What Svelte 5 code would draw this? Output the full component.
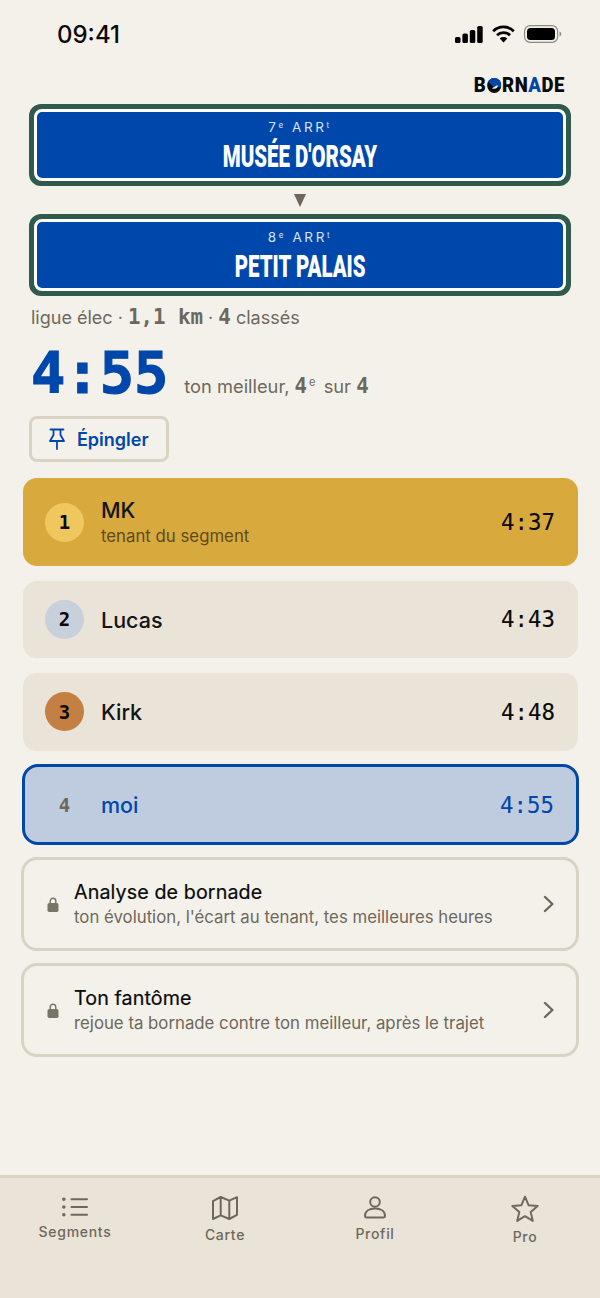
<script lang="ts">
	const ranks = [
		{ n: 1, name: 'MK', sub: 'tenant du segment', time: '4:37', cls: 'gold' },
		{ n: 2, name: 'Lucas', sub: '', time: '4:43', cls: 'silver' },
		{ n: 3, name: 'Kirk', sub: '', time: '4:48', cls: 'bronze' },
		{ n: 4, name: 'moi', sub: '', time: '4:55', cls: 'me' }
	];

	const locked = [
		{ title: 'Analyse de bornade', sub: "ton évolution, l'écart au tenant, tes meilleures heures" },
		{ title: 'Ton fantôme', sub: 'rejoue ta bornade contre ton meilleur, après le trajet' }
	];
</script>

<div class="screen">
	<header class="status">
		<span class="clock">09:41</span>
		<div class="status-icons">
			<svg width="28" height="17" viewBox="0 0 28 17" fill="#000">
				<rect x="0" y="11" width="5.5" height="6" rx="1.6" />
				<rect x="7.4" y="7.5" width="5.5" height="9.5" rx="1.6" />
				<rect x="14.8" y="4" width="5.5" height="13" rx="1.6" />
				<rect x="22.2" y="0" width="5.5" height="17" rx="1.6" />
			</svg>
			<svg width="23" height="18" viewBox="0 0 23 18" fill="none" stroke="#000" stroke-width="2.8">
				<path d="M1.2 6.2a14.6 14.6 0 0 1 20.6 0" />
				<path d="M5 10.2a9.3 9.3 0 0 1 13 0" />
				<path d="M11.5 17.6 7.7 13.6a5.6 5.6 0 0 1 7.6 0z" fill="#000" stroke="none" />
			</svg>
			<svg width="38" height="18" viewBox="0 0 38 18">
				<rect x="0.6" y="0.6" width="33" height="16.8" rx="5.5" fill="none" stroke="#8e8b85" stroke-width="1.2" />
				<rect x="3" y="3" width="28" height="12" rx="3.5" fill="#000" />
				<path d="M35.5 6.5c1.2.4 1.8 1.3 1.8 2.5s-.6 2.1-1.8 2.5z" fill="#8e8b85" />
			</svg>
		</div>
	</header>

	<div class="brand-row">
		<span class="brand">B<svg class="brand-o" width="15" height="15" viewBox="0 0 15 15"><circle cx="7.5" cy="7.5" r="7.5" fill="#0a0a0a" /><path d="M1 3.8A7.5 7.5 0 0 1 15 7.5c0 .8-.1 1.4-.3 2L7 9z" fill="#0047ab" /><path d="M5 10.2 11.2 7c.3 2.6-2.4 5-6.2 3.2z" fill="#f4f1ea" /></svg>RN<span class="brand-a">A</span>DE</span>
	</div>

	<div class="sign">
		<div class="sign-inner">
			<div class="arr">7<sup>e</sup> ARR<sup>t</sup></div>
			<div class="place"><span>MUSÉE D'ORSAY</span></div>
		</div>
	</div>
	<div class="arrow"></div>
	<div class="sign">
		<div class="sign-inner">
			<div class="arr">8<sup>e</sup> ARR<sup>t</sup></div>
			<div class="place"><span>PETIT PALAIS</span></div>
		</div>
	</div>

	<p class="meta">ligue élec · <b class="mono">1,1 km</b> · <b class="mono">4</b> classés</p>

	<div class="best">
		<span class="best-time">4:55</span>
		<span class="best-note">ton meilleur, <b class="mono">4</b><sup>e</sup> sur <b class="mono">4</b></span>
	</div>

	<button class="pin">
		<svg width="16" height="22" viewBox="0 0 16 22" fill="none" stroke="#0047ab" stroke-width="1.8" stroke-linejoin="round" stroke-linecap="round">
			<path d="M1.5 1.5h13M4.5 1.5v5.5L1 13h14l-3.5-6V1.5M8 13v8" />
		</svg>
		Épingler
	</button>

	<div class="ranks">
		{#each ranks as r}
			<div class="rank {r.cls}">
				<span class="badge">{r.n}</span>
				<div class="who">
					<div class="name">{r.name}</div>
					{#if r.sub}<div class="sub">{r.sub}</div>{/if}
				</div>
				<span class="time">{r.time}</span>
			</div>
		{/each}
	</div>

	<div class="locked">
		{#each locked as l}
			<div class="lock-card">
				<svg class="lock" width="12" height="15" viewBox="0 0 12 15">
					<path d="M3.2 7V4a2.8 2.8 0 0 1 5.6 0V7" fill="none" stroke="#7a7468" stroke-width="1.4" />
					<rect x="0.5" y="6" width="11" height="9" rx="1.8" fill="#7a7468" />
				</svg>
				<div class="lock-text">
					<div class="lock-title">{l.title}</div>
					<div class="lock-sub">{l.sub}</div>
				</div>
				<svg class="chev" width="12" height="18" viewBox="0 0 12 18" fill="none" stroke="#6e685c" stroke-width="2.4" stroke-linecap="round" stroke-linejoin="round">
					<path d="M2 2l7.4 7L2 16" />
				</svg>
			</div>
		{/each}
	</div>

	<nav class="tabs">
		<div class="tab seg">
			<svg width="26" height="20" viewBox="0 0 26 20" fill="none" stroke="#6e685c" stroke-width="2" stroke-linecap="round">
				<path d="M9.5 2.3h15.5M9.5 10h15.5M9.5 17.7h15.5" />
				<path d="M1.8 2.3h.1M1.8 10h.1M1.8 17.7h.1" stroke-width="3.4" />
			</svg>
			<span>Segments</span>
		</div>
		<div class="tab car">
			<svg width="26" height="24" viewBox="0 0 26 24" fill="none" stroke="#6e685c" stroke-width="2" stroke-linejoin="round">
				<path d="M1 5.2 8.7 1l8.6 3.6L25 1.2v17.6L17.3 23l-8.6-3.6L1 23zM8.7 1v18.4M17.3 4.6V23" />
			</svg>
			<span>Carte</span>
		</div>
		<div class="tab pro">
			<svg width="24" height="23" viewBox="0 0 24 23" fill="none" stroke="#6e685c" stroke-width="2">
				<circle cx="12" cy="6" r="4.8" />
				<path d="M2 20c0-4.5 4-7.4 10-7.4s10 2.9 10 7.4c0 .8-.6 1.4-1.4 1.4H3.4C2.6 21.4 2 20.8 2 20z" />
			</svg>
			<span>Profil</span>
		</div>
		<div class="tab star">
			<svg width="28" height="27" viewBox="0 0 30 29" fill="none" stroke="#6e685c" stroke-width="2.1" stroke-linejoin="round">
				<path d="M15 1.8l3.8 9.2 9.8.8-7.5 6.4 2.3 9.6-8.4-5.1-8.4 5.1 2.3-9.6-7.5-6.4 9.8-.8z" />
			</svg>
			<span>Pro</span>
		</div>
	</nav>
</div>

<style>
	:global(body) {
		margin: 0;
		background: #f4f1ea;
	}

	.screen {
		width: 600px;
		height: 1298px;
		background: #f4f1ea;
		display: flex;
		flex-direction: column;
		font-family: Inter, sans-serif;
		color: #0a0a0a;
		overflow: hidden;
		box-sizing: border-box;
	}

	.mono {
		font-family: 'DejaVu Sans Mono', monospace;
	}

	.status {
		height: 68px;
		flex: none;
		display: flex;
		justify-content: space-between;
		align-items: flex-start;
		padding: 20px 38px 0 57px;
		box-sizing: border-box;
	}

	.clock {
		font-size: 24px;
		font-weight: 500;
		line-height: 30px;
	}

	.status-icons {
		display: flex;
		align-items: center;
		gap: 9px;
		height: 28px;
	}

	.brand-row {
		display: flex;
		justify-content: flex-end;
		padding-right: 35px;
		height: 36px;
	}

	.brand {
		font-family: Roboto, 'Liberation Sans', sans-serif;
		font-weight: 900;
		font-size: 19.5px;
		letter-spacing: 0.6px;
		display: flex;
		align-items: center;
		height: 35px;
		transform: scaleX(0.95);
		transform-origin: right center;
	}

	.brand-o {
		margin: 0 1px 0 0.5px;
	}

	.brand-a {
		color: #0047ab;
	}

	.sign {
		margin: 0 29px;
		height: 82px;
		flex: none;
		background: #2f5a4c;
		border-radius: 12px;
		padding: 5px;
		box-sizing: border-box;
	}

	.sign-inner {
		height: 100%;
		box-sizing: border-box;
		background: #0047ab;
		border: 3px solid #fff;
		border-radius: 8px;
		color: #fff;
		text-align: center;
		padding-top: 5.5px;
	}

	.arr {
		font-size: 13.5px;
		letter-spacing: 2.6px;
		line-height: 18px;
		color: #d8e2f2;
	}

	.arr sup {
		font-size: 8px;
		line-height: 0;
		vertical-align: 4px;
	}

	.place {
		font-family: Roboto, 'Liberation Sans', sans-serif;
		font-weight: 900;
		font-size: 31px;
		line-height: 34px;
		margin-top: 4px;
	}

	.place span {
		display: inline-block;
		transform: scaleX(0.66);
		white-space: nowrap;
	}

	.arrow {
		flex: none;
		align-self: center;
		width: 0;
		height: 0;
		border-left: 6px solid transparent;
		border-right: 6px solid transparent;
		border-top: 13px solid #6e685c;
		margin: 8px 0 7px;
	}

	.meta {
		margin: 9px 0 0 31px;
		font-size: 18px;
		line-height: 24px;
		color: #6e685c;
	}

	.meta b {
		font-weight: 700;
		font-size: 20.8px;
	}

	.best {
		display: flex;
		align-items: baseline;
		margin: 10px 0 0 31px;
		height: 68px;
	}

	.best-time {
		font-family: 'DejaVu Sans Mono', monospace;
		font-size: 57px;
		font-weight: 700;
		line-height: 66px;
		color: #0047ab;
		-webkit-text-stroke: 1.2px #0047ab;
	}

	.best-note {
		margin-left: 16px;
		font-size: 18.3px;
		color: #6e685c;
	}

	.best-note b {
		font-weight: 700;
		font-size: 20.8px;
	}

	.best-note sup {
		font-size: 11px;
		line-height: 0;
		margin: 0 3px 0 2px;
	}

	.pin {
		align-self: flex-start;
		margin: 8px 0 0 29px;
		width: 140px;
		height: 46px;
		box-sizing: border-box;
		border: 3px solid #d9d3c3;
		border-radius: 8px;
		background: #f4f1ea;
		display: flex;
		align-items: center;
		justify-content: center;
		gap: 11.5px;
		font-family: Inter, sans-serif;
		font-size: 18px;
		font-weight: 600;
		color: #0047ab;
		padding: 0;
	}

	.ranks {
		margin: 16px 22px 0 23px;
		display: flex;
		flex-direction: column;
		gap: 14.67px;
	}

	.rank {
		display: flex;
		align-items: center;
		height: 77.67px;
		box-sizing: border-box;
		border-radius: 14px;
		background: #e9e3d8;
		padding: 0 23px 0 22px;
	}

	.rank.gold {
		height: 88px;
		background: #d8a93c;
	}

	.rank.me {
		height: 81px;
		margin: -1px -1px 0;
		background: #bfcce0;
		border: 3px solid #0047ab;
		border-radius: 16px;
		padding: 0 22px 0 20px;
	}

	.badge {
		width: 39px;
		height: 39px;
		flex: none;
		border-radius: 50%;
		display: flex;
		align-items: center;
		justify-content: center;
		font-family: 'DejaVu Sans Mono', monospace;
		font-size: 19px;
		font-weight: 700;
	}

	.gold .badge {
		background: #f0c75e;
	}

	.silver .badge {
		background: #c8d0dc;
	}

	.bronze .badge {
		background: #c47f42;
	}

	.me .badge {
		color: #6e685c;
	}

	.who {
		margin-left: 17px;
		padding-top: 1px;
		flex: 1;
	}

	.name {
		font-size: 21.5px;
		font-weight: 550;
		line-height: 26px;
		color: #141414;
	}

	.me .name {
		color: #0047ab;
	}

	.sub {
		margin-top: 1px;
		font-size: 16.8px;
		line-height: 24px;
		color: #5e4a1c;
	}

	.time {
		font-family: 'DejaVu Sans Mono', monospace;
		font-size: 22.4px;
		-webkit-text-stroke: 0.12px currentColor;
	}

	.me .time {
		color: #0047ab;
	}

	.locked {
		margin: 12px 21px 0 21px;
		display: flex;
		flex-direction: column;
		gap: 12.5px;
	}

	.lock-card {
		display: flex;
		align-items: center;
		height: 93.5px;
		box-sizing: border-box;
		border: 3px solid #d9d3c3;
		border-radius: 16px;
		padding: 0 21px 0 23px;
	}

	.lock {
		flex: none;
	}

	.lock-text {
		margin-left: 15px;
		flex: 1;
	}

	.lock-title {
		font-size: 19.7px;
		font-weight: 400;
		letter-spacing: 0.1px;
		line-height: 26px;
		-webkit-text-stroke: 0.2px currentColor;
	}

	.lock-sub {
		margin-top: 1px;
		font-size: 16.8px;
		line-height: 23px;
		color: #6e685c;
	}

	.tabs {
		margin-top: auto;
		height: 123px;
		flex: none;
		box-sizing: border-box;
		background: #e9e3d8;
		border-top: 3px solid #d9d3c3;
		display: grid;
		grid-template-columns: repeat(4, 1fr);
	}

	.tab {
		display: flex;
		flex-direction: column;
		align-items: center;
		font-size: 14px;
		font-weight: 500;
		letter-spacing: 0.7px;
		color: #6e685c;
		gap: 6px;
	}

	.tab.seg {
		padding-top: 19px;
	}

	.tab.car,
	.tab.pro {
		padding-top: 18px;
	}

	.tab.star {
		padding-top: 16.5px;
	}

	.tab span {
		line-height: 18px;
	}
</style>
